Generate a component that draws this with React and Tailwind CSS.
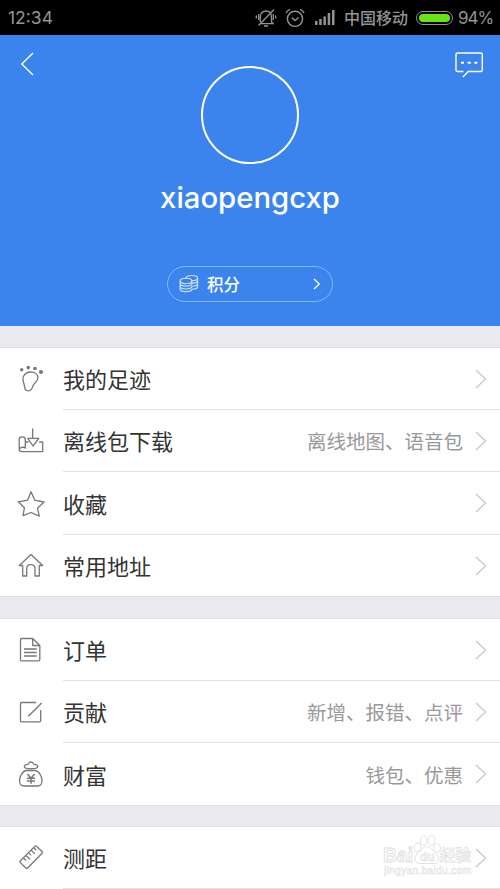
import React from 'react';
import clsx from 'clsx';

const icons = {
  foot: (
    <>
      <path d="M14.500 9C10 9 7 12 7 16c0 3.500 1.300 4.500 1.500 7.500 .2 2.700 1.700 4.300 4 4.300 3.200 0 3.700-2.800 4.500-5 1-2.600 5-4.300 5-8.300C22 11 18.500 9 14.500 9z" />
      <g fill="currentColor" stroke="none">
        <circle cx="5.700" cy="6.700" r="1.700" />
        <circle cx="12.300" cy="4.600" r="1.800" />
        <circle cx="19" cy="5.500" r="1.800" />
        <circle cx="25" cy="9" r="2.100" />
      </g>
    </>
  ),
  download: (
    <>
      <path d="M16.700 3.500v9.800M11.800 13.300h11L17 21z" />
      <path d="M3.200 24V14.500c0-3.500 6.100-3.500 6.100 0v9.300M9.300 22.500c-3.300-.6-6.100 0-6.100 2 0 1.500 1 2.100 2.500 2.100h21V17h-3.500M9.300 17h3.200" />
    </>
  ),
  star: <path d="M15 3.800l3.700 8.300 9.300 1.900-6.500 6.300 1.800 7.900-8.300-3.700L7 27.700l1.400-7.900-6.100-6 9.400-1.700z" />,
  home: <path d="M15 4.500L3.300 15.500h3.400V26h4v-7.500c0-5.300 8.300-5.300 8.300 0V26h4.300V15.500h3.400z" />,
  doc: (
    <>
      <path d="M16.700 4.500H5.500q-1 0-1 1v20.300q0 1 1 1h17.300q1 0 1-1V11.500zM16.700 4.500v7h7.100" />
      <path d="M8 15h12.700M8 18.500h12.700M8 22h12.700" />
    </>
  ),
  edit: (
    <path d="M20 6.500H5.500q-1 0-1 1v17.300q0 1 1 1h18.200q1 0 1-1V14M25.700 7L12.300 20.300" />
  ),
  money: (
    <>
      <path d="M10.500 10.300C7 9.500 8 6.500 11 6.700c.8 0 1.200-.3 1.600-1.200 1-2 3.800-2 4.800 0 .4.900.8 1.200 1.600 1.200 3-.2 4 2.800.5 3.600-3 .6-6 .6-9 0z" />
      <path d="M10.500 12.500h8.500c3.500 0 7 5.500 7 10 0 3.500-1.500 5.500-4.500 5.500H8.200c-3 0-4.700-2-4.700-5.500 0-4.500 3.500-10 7-10z" />
      <path d="M11.500 16l3.500 4.300 3.500-4.300M15 20v5.700M11 20.300h8M11 23h8" strokeWidth="1.500" />
    </>
  ),
  ruler: (
    <>
      <path d="M18.800 4.400q.9-.9 1.800 0l5.500 5q.9.900 0 1.800L11.600 26q-.9.900-1.800 0l-5.400-5.400q-.9-.9 0-1.800z" />
      <path d="M7.500 16l2.700 2.600M10 13.500l4 3.700M12.600 10.900l2.600 2.500M15.100 8.300l3.800 3.600M17.600 5.800l2.500 2.500" />
    </>
  ),
};

const sections = [
  [
    { icon: 'foot', label: '我的足迹' },
    { icon: 'download', label: '离线包下载', detail: '离线地图、语音包' },
    { icon: 'star', label: '收藏', tall: true },
    { icon: 'home', label: '常用地址' },
  ],
  [
    { icon: 'doc', label: '订单' },
    { icon: 'edit', label: '贡献', detail: '新增、报错、点评' },
    { icon: 'money', label: '财富', detail: '钱包、优惠', tall: true },
  ],
  [{ icon: 'ruler', label: '测距', watermark: true }],
];

function StatusBar() {
  return (
    <div className="flex h-[35px] items-center bg-black pl-2 pr-[9px] text-[#939393]">
      <span className="pt-px text-[17.500px] leading-none">12:34</span>
      <div className="ml-auto flex items-center">
        {/* muted bell */}
        <svg className="mr-[8px]" width="22" height="20" viewBox="0 0 22 20" fill="none" stroke="currentColor" strokeWidth="1.300">
          <path d="M5.300 14V9.500C5.300 5 7.500 3 11 3s5.500 2 5.500 6.500V14l1.500 1.600H4.500M9 18h4M19 1.500L3.500 17.500M3.700 6v6M1.300 7.500v3M18.300 6v6M20.700 7.500v3" />
        </svg>
        {/* alarm */}
        <svg className="mr-[10px]" width="20" height="20" viewBox="0 0 20 20" fill="none" stroke="currentColor" strokeWidth="1.400">
          <circle cx="10" cy="10.800" r="7.600" />
          <path d="M6.800 9.500l3.200 3 3.500-3M1 5c.6-1.800 2-3 4-3.700M19 5c-.6-1.800-2-3-4-3.700" />
        </svg>
        {/* signal */}
        <svg className="mr-[9px]" width="20" height="17" viewBox="0 0 20 17" fill="currentColor">
          <rect x="0" y="12" width="2.500" height="4" />
          <rect x="4.200" y="10" width="2.500" height="6" />
          <rect x="8.400" y="7.500" width="2.500" height="8.500" />
          <rect x="12.700" y="4" width="2.500" height="12" />
          <rect x="17" y="1" width="2.500" height="15" />
        </svg>
        <span className="text-[16px] font-medium leading-none">中国移动</span>
        <div className="ml-2 h-[14px] w-[37px] rounded-full border border-[#939393] p-[2px]">
          <div className="h-full rounded-full bg-[#66e416]" />
        </div>
        <span className="ml-[5px] w-[33px] pt-px text-[17px] leading-none tracking-[-0.060em]">94%</span>
      </div>
    </div>
  );
}

function Header() {
  return (
    <div className="relative flex h-[291px] flex-col items-center bg-[#3b84ee]">
      <svg className="absolute left-5 top-[17px]" width="15" height="24" viewBox="0 0 15 24" fill="none" stroke="white" strokeWidth="1.400">
        <path d="M13 1L1.800 12 13 23" />
      </svg>
      <svg className="absolute left-[455px] top-[17px]" width="29" height="26" viewBox="0 0 29 26" fill="none" stroke="white" strokeWidth="1.400">
        <path d="M8.500 19.500H2.500q-1.500 0-1.500-1.500V2.500Q1 1 2.500 1h23.300q1.500 0 1.500 1.500V18q0 1.500-1.500 1.500H13.200L8 25" />
        <path d="M6 10.800h3M12.700 10.800h3M19.300 10.800h3" strokeWidth="2" />
      </svg>

      <div className="mt-[31px] h-[98px] w-[98px] rounded-full border-2 border-white" />
      <h1 className="mt-4 text-[29.300px] font-medium leading-[36px] text-white">xiaopengcxp</h1>

      <button className="mt-[50px] flex h-[36px] w-[166px] items-center rounded-full border-[1.500px] border-[#8ab6f6] pl-[11px] pr-[11px] text-white">
        <svg width="20" height="20" viewBox="0 0 20 20" fill="none" stroke="#d2e3fc" strokeWidth="1.100">
          <ellipse cx="7" cy="7" rx="5.900" ry="2.700" />
          <path d="M1.100 7v2.500c0 3.500 11.800 3.500 11.800 0V7M1.100 10v2.300c0 3.500 11.800 3.500 11.800 0M1.100 13v2c0 3.500 11.800 3.500 11.800 0" />
          <path d="M6.700 4.300C6.500.7 18.600.5 18.600 4c0 2.300-3 2.700-5.600 2.700M18.600 4v2.500c0 1.800-2.500 2.700-5.600 2.800M18.600 6.500v3c0 1.800-2.500 2.700-5.600 2.800M18.600 9.500v3c0 1.800-2.500 2.700-5.600 2.800" />
        </svg>
        <span className="ml-[8px] pt-[2px] text-[16.500px] font-medium leading-none">积分</span>
        <svg className="ml-auto" width="8" height="12" viewBox="0 0 8 12" fill="none" stroke="white" strokeWidth="1.300">
          <path d="M1 1l5.300 5L1 11" />
        </svg>
      </button>
    </div>
  );
}

function Watermark() {
  return (
    <div className="absolute left-[383px] top-[7px] h-[46px] w-[90px] text-[#dedede]">
      <svg width="90" height="46" viewBox="0 0 90 46" fill="white" stroke="currentColor" strokeWidth=".9">
        <text x="0" y="28" fontSize="20" fontFamily="Liberation Sans" fontWeight="bold" textLength="30" lengthAdjust="spacingAndGlyphs">Bai</text>
        <text x="57" y="27" fontSize="15.500" fontFamily="Noto Sans CJK SC" fontWeight="bold" strokeWidth=".7">经验</text>
        <ellipse cx="34.500" cy="13.500" rx="3.300" ry="4.300" />
        <ellipse cx="40.600" cy="6.300" rx="3.500" ry="4.800" />
        <ellipse cx="48.600" cy="6.300" rx="3.500" ry="4.800" />
        <ellipse cx="54" cy="14" rx="3.300" ry="4.300" />
        <path d="M44 12.500c-4 0-5 3-8 5.500-3.500 3-4 5-4 7 0 3 2 4.500 5 4.500h14c3 0 4.500-1.500 4.500-4.500 0-2-1-4-4-7-2.500-2.500-3.500-5.500-7.500-5.500z" />
        <text x="37" y="27" fontSize="12" fontFamily="Liberation Sans" fontWeight="bold" strokeWidth=".7">du</text>
        <text x="1" y="40" fontSize="10" fontFamily="Liberation Sans" strokeWidth=".5" textLength="87">jingyan.baidu.com</text>
      </svg>
    </div>
  );
}

function Row({ item, last }) {
  return (
    <div className={clsx('relative flex pl-4', item.tall ? 'h-[63px]' : 'h-[62px]', last && 'border-b border-[#dedfe2]')}>
      <div className="flex w-[47px] items-center pb-px">
        <svg width="31" height="31" viewBox="0 0 31 31" fill="none" stroke="currentColor" strokeWidth="1.300" strokeLinejoin="round" className="text-[#77777c]">
          {icons[item.icon]}
        </svg>
      </div>
      <div className={clsx('flex flex-1 items-center pr-[13px]', !last && 'border-b border-[#e1e1e3]')}>
        <span className="pt-[3px] text-[22px] leading-none text-[#333333]">{item.label}</span>
        <span className="ml-auto pt-[5px] text-[19.500px] leading-none text-[#999999]">{item.detail}</span>
        <svg className="ml-3" width="12" height="20" viewBox="0 0 12 20" fill="none" stroke="#c5c5cc" strokeWidth="1.200">
          <path d="M1 1l9.500 9L1 19" />
        </svg>
      </div>
      {item.watermark && <Watermark />}
    </div>
  );
}

export default function App() {
  return (
    <div className="h-[889px] w-[500px] overflow-hidden bg-[#eaebef] font-[Inter,'Noto_Sans_CJK_SC',sans-serif]">
      <StatusBar />
      <Header />
      {sections.map((rows, i) => (
        <div key={i} className={clsx('border-t border-[#dedfe2] bg-white', i === 2 ? 'mt-5' : 'mt-[21px]')}>
          {rows.map((item, j) => (
            <Row key={item.label} item={item} last={i < 2 && j === rows.length - 1} />
          ))}
        </div>
      ))}
    </div>
  );
}
